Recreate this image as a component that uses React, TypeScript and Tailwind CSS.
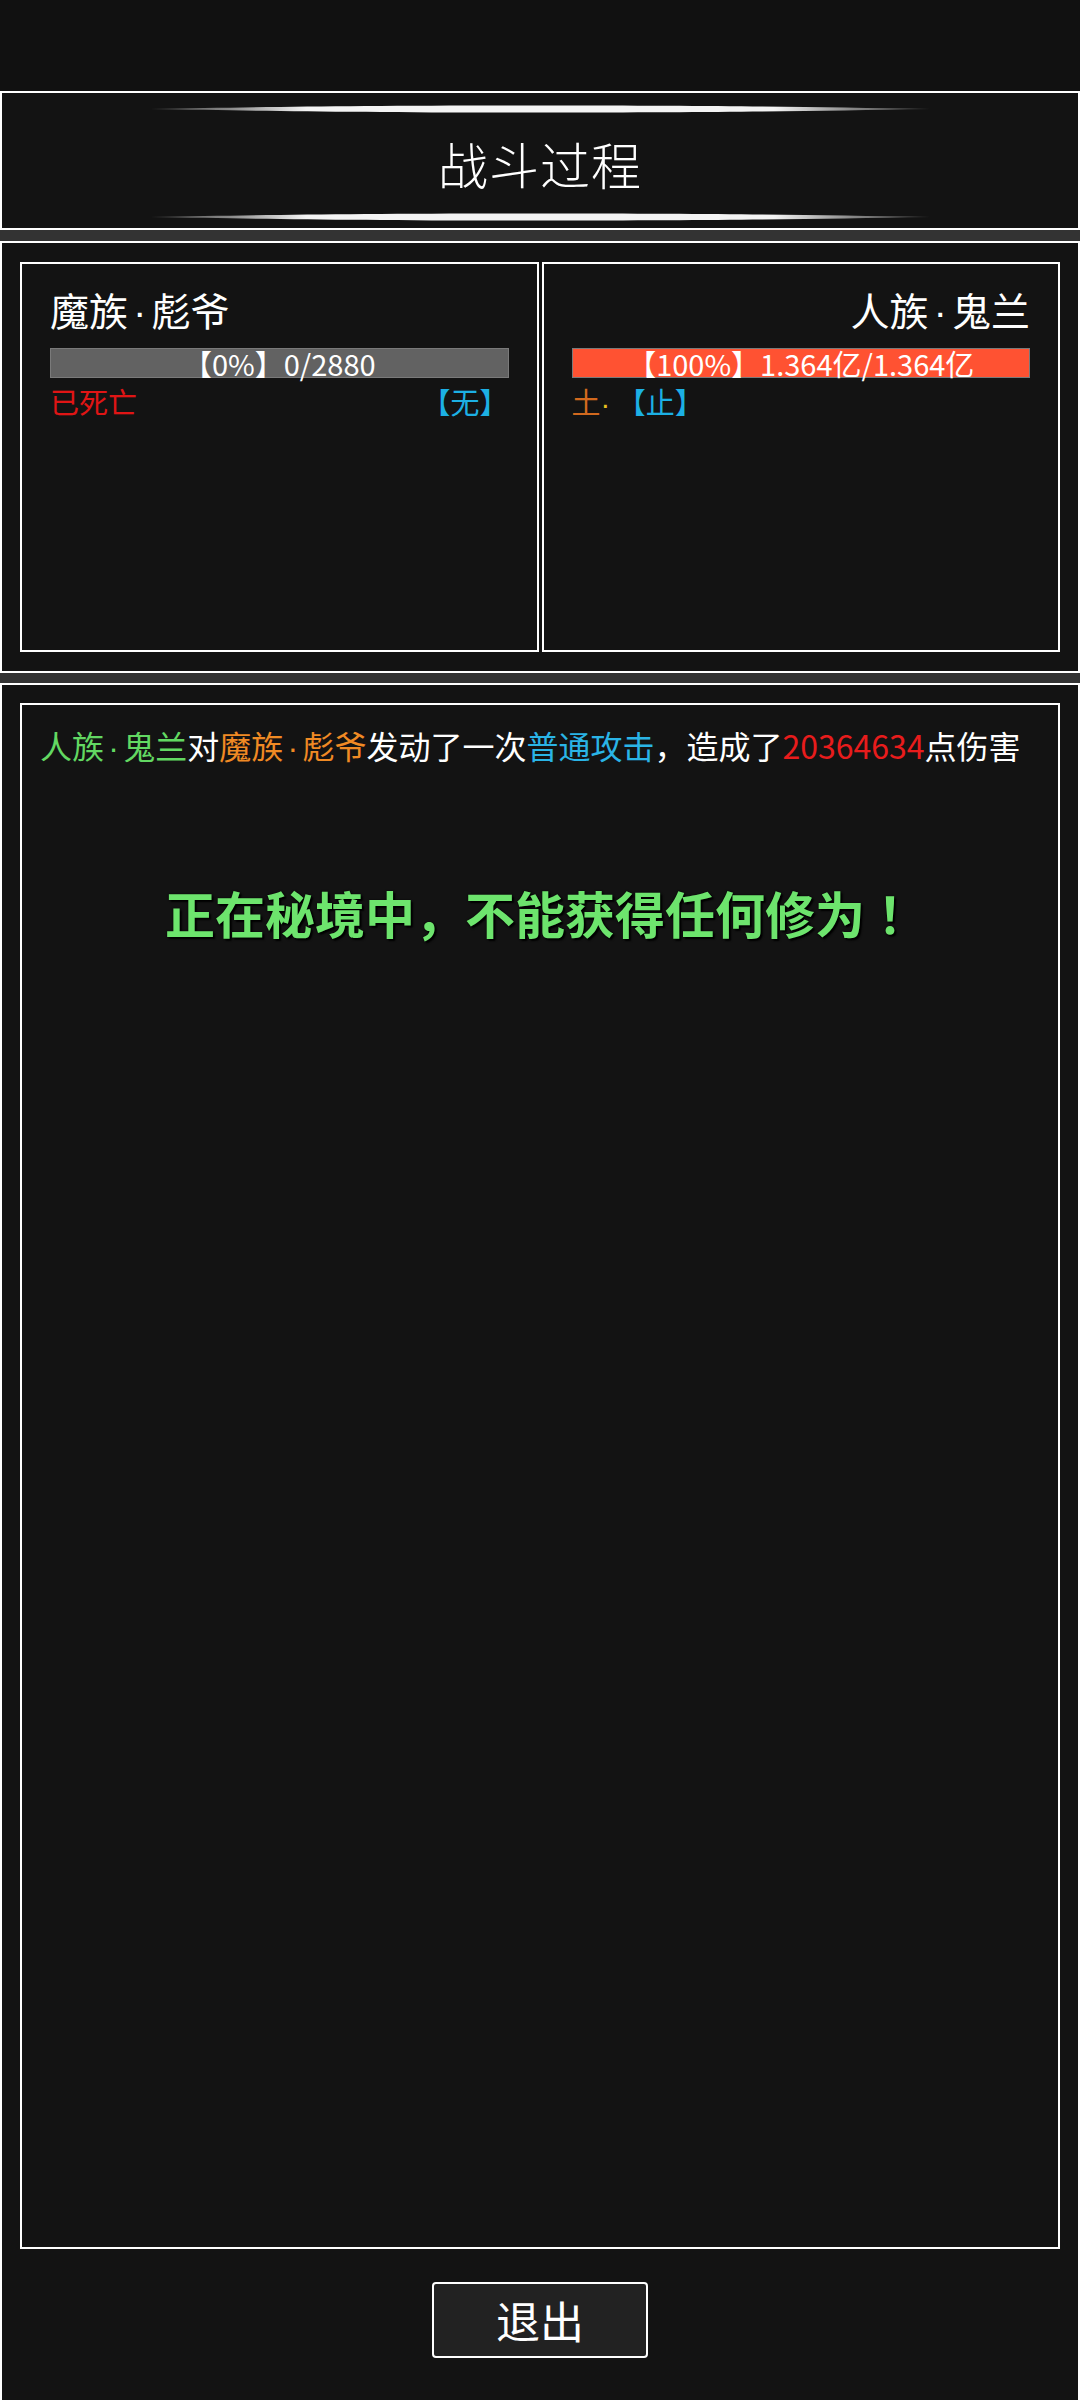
import React from 'react'

const font = { fontFamily: '"Noto Sans CJK SC", "Noto Sans", sans-serif' }

// 半角间隔点，原图里比全角窄
const Dot: React.FC<{ className?: string }> = ({ className = '' }) => (
  <span className={`inline-block w-[0.6em] text-center font-['Liberation_Sans'] ${className}`}>·</span>
)

const GlowLine: React.FC = () => (
  <svg width="780" height="10" viewBox="0 0 780 10" className="block">
    <defs>
      <linearGradient id="glow" x1="0" y1="0" x2="1" y2="0">
        <stop offset="0" stopColor="#444" />
        <stop offset="0.1" stopColor="#888" />
        <stop offset="0.2" stopColor="#f4f4f4" />
        <stop offset="0.8" stopColor="#f4f4f4" />
        <stop offset="0.9" stopColor="#888" />
        <stop offset="1" stopColor="#444" />
      </linearGradient>
    </defs>
    <path d="M0 5 C120 3 200 1.5 390 1.5 C580 1.5 660 3 780 5 C660 7 580 8.5 390 8.5 C200 8.5 120 7 0 5 Z" fill="url(#glow)" />
  </svg>
)

interface FighterProps {
  name: React.ReactNode
  hpText: string
  barColor: string
  align: 'left' | 'right'
  children: React.ReactNode
}

const Fighter: React.FC<FighterProps> = ({ name, hpText, barColor, align, children }) => (
  <div className="border-2 border-white h-[390px] px-[28px] pt-[20px]">
    <div className={`text-[39px] leading-[50px] text-white ${align === 'right' ? 'text-right' : 'text-left'}`}>
      {name}
    </div>
    <div className={`mt-[10px] h-[30px] border border-[#7a7a7a] ${barColor} flex items-center justify-center text-[29px] leading-[30px] text-white whitespace-nowrap`}>
      {hpText}
    </div>
    <div className="mt-[8px] flex justify-between text-[29px] leading-[30px]">{children}</div>
  </div>
)

export default function App() {
  return (
    <div className="w-[1080px] h-[2400px] bg-[#111111] overflow-hidden" style={font}>
      <div className="h-[91px]" />

      {/* 标题 */}
      <section className="h-[139px] border-2 border-white bg-[#131313] flex flex-col items-center justify-between pt-[11px] pb-[6px]">
        <GlowLine />
        <h1 className="text-[50px] leading-[60px] text-white font-light tracking-[1px]">战斗过程</h1>
        <GlowLine />
      </section>

      <div className="h-[11px] bg-[#333333]" />

      {/* 双方 */}
      <section className="border-2 border-white bg-[#131313] px-[18px] py-[19px] grid grid-cols-2 gap-[3px]">
        <Fighter name={<>魔族<Dot />彪爷</>} hpText="【0%】0/2880" barColor="bg-[#626262]" align="left">
          <span className="text-[#e01515]">已死亡</span>
          <span className="text-[#1cb0e4]">【无】</span>
        </Fighter>
        <Fighter name={<>人族<Dot />鬼兰</>} hpText="【100%】1.364亿/1.364亿" barColor="bg-[#ff5232]" align="right">
          <span>
            <span className="text-[#d2691e]">土</span>
            <span className="text-[#e8c020] font-['Liberation_Sans']">·</span>
            <span> </span>
            <span className="text-[#1cb0e4]">【止】</span>
          </span>
        </Fighter>
      </section>

      <div className="h-[10px] bg-[#333333]" />

      {/* 战斗日志 */}
      <section className="h-[1717px] border-2 border-white border-b-0 bg-[#131313] px-[18px] pt-[18px] flex flex-col">
        <div className="relative h-[1546px] border-2 border-white pl-[18px] pt-[18px]">
          <p className="text-[32px] leading-[44px] text-white whitespace-nowrap">
            <span className="text-[#62d862]">人族<Dot />鬼兰</span>
            对
            <span className="text-[#f08a24]">魔族<Dot />彪爷</span>
            发动了一次
            <span className="text-[#2ab4e6]">普通攻击</span>
            ，造成了
            <span className="text-[#e81c1c]">20364634</span>
            点伤害
          </p>
          <div className="absolute left-0 right-0 top-[177px] text-center text-[50px] leading-[60px] font-bold text-[#6de46d] [text-shadow:0_0_2px_#000,2px_2px_2px_#000]">
            正在秘境中，不能获得任何修为
            <span className="font-['Noto_Sans_CJK_TC']">！</span>
          </div>
        </div>
        <div className="flex-1 flex items-center justify-center pb-[10px]">
          <button className="w-[216px] h-[76px] bg-[#222222] border-2 border-white rounded-[4px] text-white text-[44px] leading-none">
            退出
          </button>
        </div>
      </section>
    </div>
  )
}
